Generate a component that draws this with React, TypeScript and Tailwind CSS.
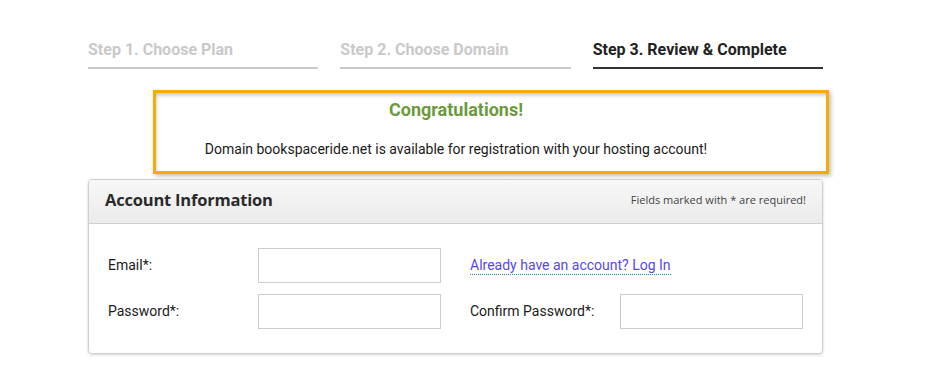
import React from "react";

export default function App() {
  const roboto = { fontFamily: "Roboto, 'Liberation Sans', sans-serif" };
  return (
    <div className="w-[926px] h-[373px] bg-white overflow-hidden" style={roboto}>
      <div className="ml-[88px] w-[735px] pt-[40px]">
        <div className="grid grid-cols-3 gap-[22px]">
          <div className="flex flex-col">
            <div className="text-[16px] font-bold text-[#c9c9c9] leading-[20px]">Step 1. Choose Plan</div>
            <div className="mt-[7px] h-[2px] bg-[#c9c9c9]" />
          </div>
          <div className="flex flex-col">
            <div className="text-[16px] font-bold text-[#c9c9c9] leading-[20px]">Step 2. Choose Domain</div>
            <div className="mt-[7px] h-[2px] bg-[#c9c9c9]" />
          </div>
          <div className="flex flex-col">
            <div className="text-[16px] font-bold text-[#222] leading-[20px]">Step 3. Review &amp; Complete</div>
            <div className="mt-[7px] h-[2px] bg-[#333]" />
          </div>
        </div>

        <div className="ml-[65px] w-[676px] h-[84px] mt-[21px] pr-[70px] border-[3px] border-[#f8ab00] bg-white shadow-[inset_2px_4px_4px_-2px_rgba(0,0,0,0.25),2px_2px_4px_rgba(0,0,0,0.25)] flex flex-col items-center">
          <div className="mt-[6px] text-[18px] font-bold text-[#6b9a3b] leading-[22px]">Congratulations!</div>
          <div className="mt-[18px] text-[14px] text-[#1a1a1a] leading-[20px]">
            Domain bookspaceride.net is available for registration with your hosting account!
          </div>
        </div>

        <div className="mt-[5px] border border-[#cfcfcf] rounded-[4px] shadow-[0_1px_3px_rgba(0,0,0,0.18)] overflow-hidden">
          <div className="h-[44px] pb-[2px] flex items-center justify-between px-[16px] bg-gradient-to-b from-[#f7f7f7] to-[#ebebeb] border-b border-[#cfcfcf]">
            <div className="text-[16.5px] font-bold text-[#2a2a2a] tracking-[-0.2px]" style={{ fontFamily: "'Open Sans', sans-serif" }}>
              Account Information
            </div>
            <div className="text-[11px] text-[#444]" style={{ fontFamily: "'Open Sans', sans-serif" }}>
              Fields marked with * are required!
            </div>
          </div>
          <div className="px-[19px] pt-[24px] pb-[24px] flex flex-col gap-[11px] text-[14px] text-[#1a1a1a]">
            <div className="flex items-center h-[35px]">
              <div className="w-[150px]">Email*:</div>
              <div className="w-[183px] h-[35px] border border-[#cccccc] bg-white" />
              <div className="ml-[29px]">
                <span className="text-[#5548ee] border-b border-dotted border-[#2a7fb0] pb-[1px]">Already have an account? Log In</span>
              </div>
            </div>
            <div className="flex items-center h-[35px]">
              <div className="w-[150px]">Password*:</div>
              <div className="w-[183px] h-[35px] border border-[#cccccc] bg-white" />
              <div className="ml-[29px] w-[150px]">Confirm Password*:</div>
              <div className="w-[183px] h-[35px] border border-[#cccccc] bg-white" />
            </div>
          </div>
        </div>
      </div>
    </div>
  );
}
